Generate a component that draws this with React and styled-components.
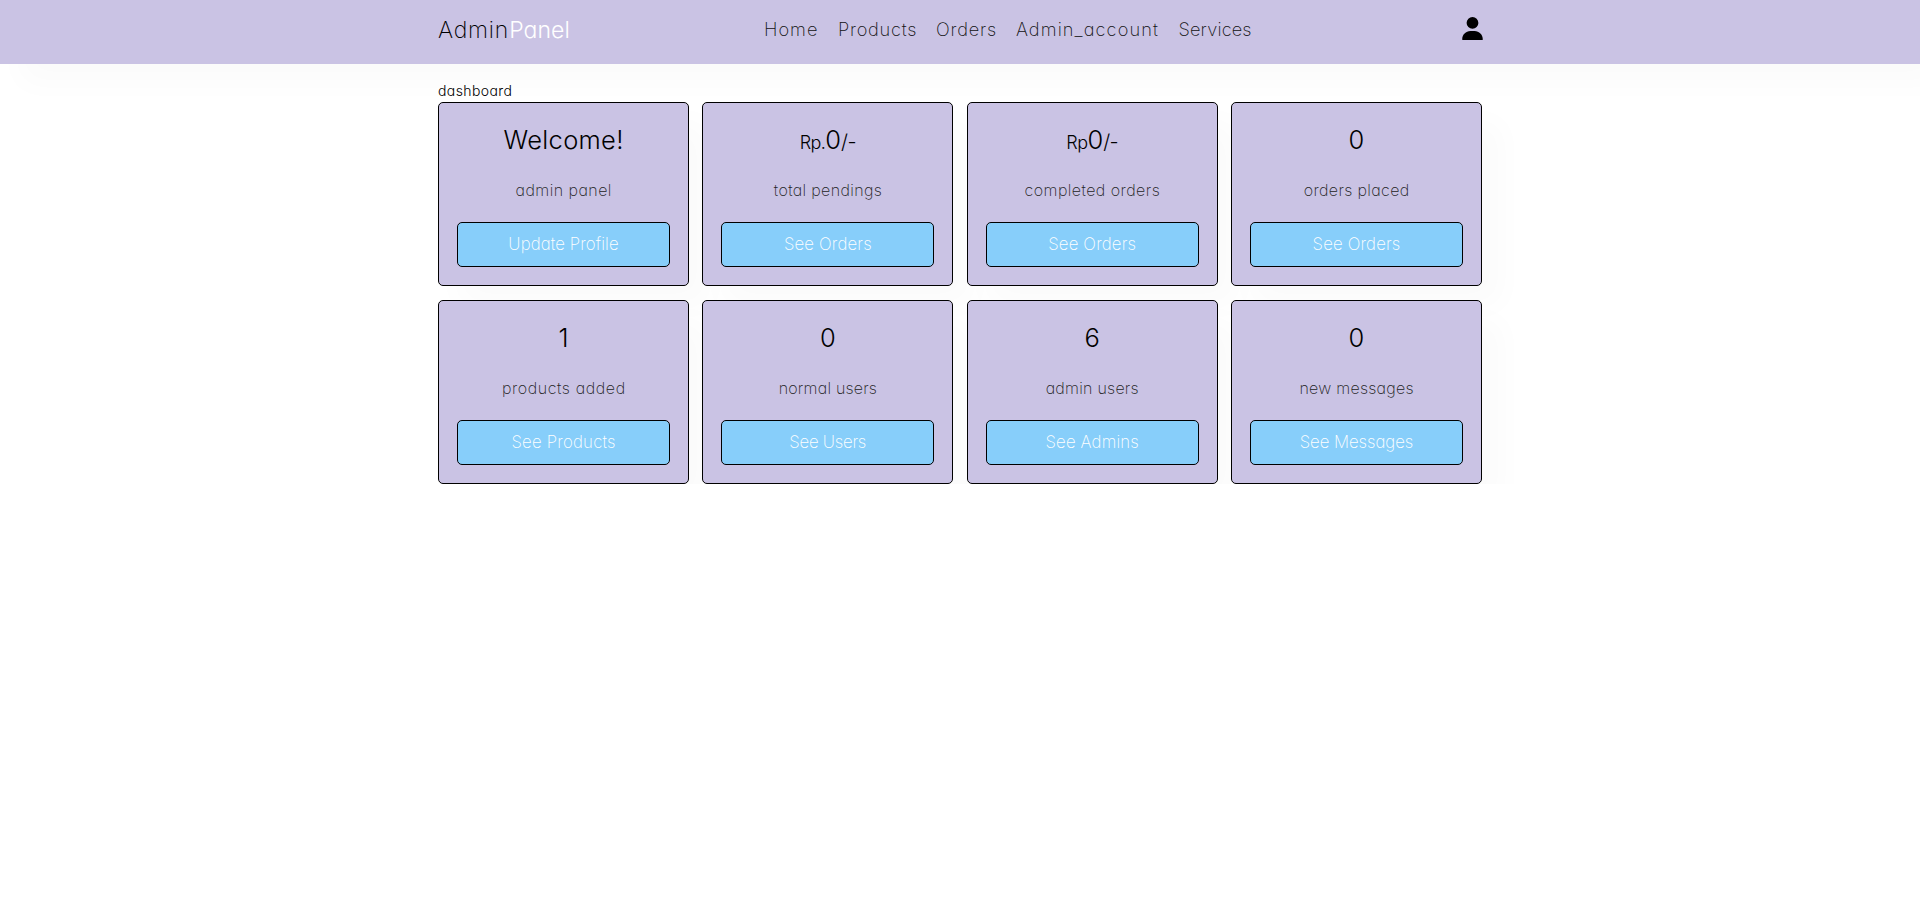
import React from 'react';
import styled, { createGlobalStyle } from 'styled-components';
import { FaUser } from 'react-icons/fa6';

const GlobalStyle = createGlobalStyle`
  * { box-sizing: border-box; margin: 0; padding: 0; }
  body {
    background: #fff;
    color: #000;
    font-family: Inter, "Open Sans", sans-serif;
    font-weight: 200;
    font-feature-settings: "cv11";
  }
  a { color: inherit; text-decoration: none; }
`;

const lavender = '#cac3e4';
const softShadow = '20px 20px 30px rgba(0, 0, 0, 0.02)';

const Text = styled.span`
  display: inline-block;
  white-space: nowrap;
  letter-spacing: ${({ $ls = 0 }) => $ls}px;
  margin-right: ${({ $ls = 0 }) => -$ls}px;
`;

const Header = styled.header`
  height: 64px;
  background: ${lavender};
  box-shadow: ${softShadow};
`;

const HeaderInner = styled.div`
  display: flex;
  align-items: flex-start;
  width: 1044px;
  margin: 0 auto;
`;

const Logo = styled.a`
  display: flex;
  width: 130px;
  font-size: 23px;
  line-height: 60px;
`;

const LogoPart = styled.span`
  letter-spacing: ${({ $ls }) => $ls}px;
  color: ${({ $light }) => ($light ? '#fff' : '#000')};
  font-weight: ${({ $light }) => ($light ? 260 : 200)};
`;

const Nav = styled.nav`
  display: flex;
  gap: 20px;
  margin-left: 196px;
  font-size: 18.2px;
  line-height: 58px;
`;

const NavLink = styled.a`
  width: ${({ $w }) => $w}px;
  white-space: nowrap;
  color: #111;
`;

const UserButton = styled.a`
  display: flex;
  margin-left: auto;
  margin-right: -1px;
  padding-top: 16.5px;
  svg { width: 21px; height: 23.5px; }
`;

const Main = styled.main`
  width: 1044px;
  margin: 0 auto;
  padding-top: 16px;
`;

const PageTitle = styled.h1`
  font-size: 14px;
  font-weight: 300;
  line-height: 22px;
`;

const Grid = styled.section`
  display: grid;
  grid-template-columns: repeat(4, 251px);
  justify-content: space-between;
  row-gap: 14px;
`;

const Card = styled.article`
  height: 184px;
  padding: 18px;
  border: 1px solid #000;
  border-radius: 5px;
  background: ${lavender};
  box-shadow: ${softShadow};
  text-align: center;
`;

const Value = styled.h3`
  font-size: 25.5px;
  font-weight: 300;
  line-height: 37px;
  height: 37px;
`;

const Unit = styled.span`
  font-size: ${({ $s = 18 }) => $s}px;
  letter-spacing: -0.6px;
`;

const Label = styled.p`
  margin: 19px 0 19px;
  font-size: 16px;
  line-height: 26px;
  color: #222;
`;

const Action = styled.a`
  display: block;
  height: 45px;
  border: 1px solid #000;
  border-radius: 5px;
  background: #87cefa;
  color: #fff;
  font-size: 16.8px;
  line-height: 43px;
`;

const links = [
  ['Home', 54, 1.0],
  ['Products', 78, 0.75],
  ['Orders', 60, 0.8],
  ['Admin_account', 142.5, 1.1],
  ['Services', 73, 0.15],
];

const cards = [
  { value: 'Welcome!', valueLs: 0.3, label: 'admin panel', labelLs: 0.45, action: 'Update Profile', actionLs: 0.1 },
  { prefix: 'Rp.', value: '0', suffix: '/-', label: 'total pendings', labelLs: 0.35, action: 'See Orders', actionLs: 0.15 },
  { prefix: 'Rp', value: '0', suffix: '/-', label: 'completed orders', labelLs: 0.45, action: 'See Orders', actionLs: 0.15 },
  { value: '0', label: 'orders placed', labelLs: 0.35, action: 'See Orders', actionLs: 0.15 },
  { value: '1', label: 'products added', labelLs: 0.6, action: 'See Products', actionLs: 0.2 },
  { value: '0', label: 'normal users', labelLs: 0.2, action: 'See Users', actionLs: -0.25 },
  { value: '6', label: 'admin users', labelLs: 0.25, action: 'See Admins', actionLs: 0.15 },
  { value: '0', label: 'new messages', labelLs: 0.25, action: 'See Messages', actionLs: -0.05 },
];

export default function App() {
  return (
    <>
      <GlobalStyle />
      <Header>
        <HeaderInner>
          <Logo href="#">
            <LogoPart $ls={0.8}>Admin</LogoPart>
            <LogoPart $ls={0.1} $light>Panel</LogoPart>
          </Logo>
          <Nav>
            {links.map(([name, width, ls]) => (
              <NavLink key={name} href="#" $w={width}><Text $ls={ls}>{name}</Text></NavLink>
            ))}
          </Nav>
          <UserButton href="#" aria-label="Account"><FaUser /></UserButton>
        </HeaderInner>
      </Header>
      <Main>
        <PageTitle><Text $ls={0.4}>dashboard</Text></PageTitle>
        <Grid>
          {cards.map((c) => (
            <Card key={c.label}>
              <Value>
                {c.prefix && <Unit>{c.prefix}</Unit>}
                <Text $ls={c.valueLs}>{c.value}</Text>
                {c.suffix && <Unit $s={20}>{c.suffix}</Unit>}
              </Value>
              <Label><Text $ls={c.labelLs}>{c.label}</Text></Label>
              <Action href="#"><Text $ls={c.actionLs}>{c.action}</Text></Action>
            </Card>
          ))}
        </Grid>
      </Main>
    </>
  );
}
